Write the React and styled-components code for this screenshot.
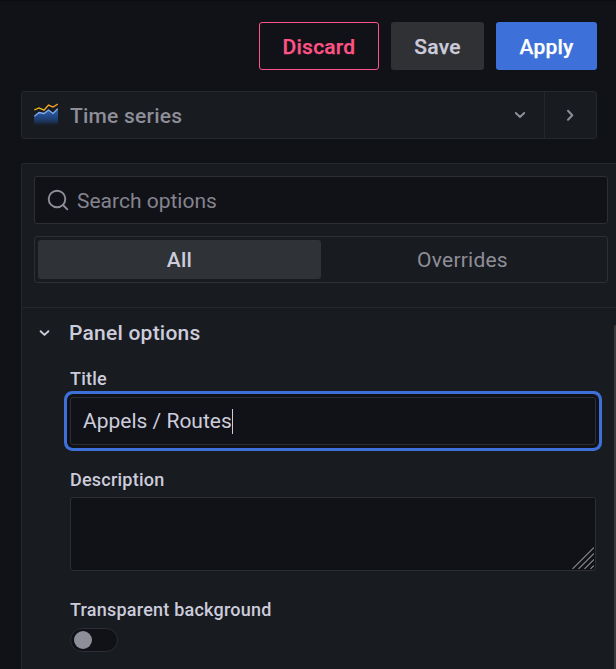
import React from "react";
import styled, { createGlobalStyle } from "styled-components";

const GlobalStyle = createGlobalStyle`
  *, *::before, *::after { box-sizing: border-box; }
  html, body { margin: 0; background: #111217; overflow: hidden; }
  body { font-family: Roboto, "Liberation Sans", sans-serif; font-size: 21px; color: #ccccdc; }
  button { font: inherit; margin: 0; padding: 0; border: 0; background: none; color: inherit; }
`;

const Page = styled.div`
  width: 616px;
  height: 669px;
  padding-top: 21px;
  display: flex;
  flex-direction: column;
  overflow: hidden;
  background: #111217;
  border-top: 1px solid #0b0c0e;
`;

const Toolbar = styled.div`
  display: flex;
  justify-content: flex-end;
  gap: 12px;
  padding-right: 19px;
`;

const variants = {
  danger: "background: transparent; color: #ff5286; border: 1px solid #ff5286;",
  secondary: "background: #303135; color: #ccccdc;",
  primary: "background: #3d71d9; color: #ffffff;",
};

const Button = styled.button`
  && {
    width: ${(p) => p.$width}px;
    height: 48px;
    padding-top: 2px;
    border-radius: 3px;
    font-weight: 500;
    letter-spacing: 0.225px;
    -webkit-text-stroke: 0.25px currentColor;
    ${(p) => variants[p.$variant]}
  }
`;

const VizPicker = styled.div`
  display: flex;
  flex: none;
  width: 576px;
  height: 48px;
  margin: 21px 0 24px 21px;
  background: #181b1f;
  border: 1px solid #24272c;
  border-radius: 3px;
  color: #8e8e99;
`;

const VizSelect = styled.button`
  && {
    flex: 1;
    display: flex;
    align-items: center;
    padding: 0 17px 0 12px;
    font-weight: 500;
    letter-spacing: 0.225px;
    text-align: left;
  }
`;

const VizName = styled.span`
  flex: 1;
  margin-left: 12px;
  padding-top: 2px;
`;

const VizToggle = styled.button`
  && {
    width: 52px;
    padding-right: 2px;
    border-left: 1px solid #24272c;
    display: flex;
    align-items: center;
    justify-content: center;
  }
`;

const Pane = styled.section`
  position: relative;
  flex: 1;
  margin-left: 21px;
  background: #181b1f;
  border: solid #24272c;
  border-width: 1px 0 0 1px;
  border-top-left-radius: 3px;
`;

const PaneHeader = styled.div`
  display: flex;
  flex-direction: column;
  gap: 12px;
  padding: 12px 8px 24px 12px;
  border-bottom: 1px solid #24272c;
`;

const SearchBox = styled.div`
  display: flex;
  align-items: center;
  gap: 7px;
  height: 48px;
  padding-left: 12px;
  background: #111217;
  border: 1px solid #2d2e34;
  border-radius: 3px;
  color: #84848f;
`;

const Placeholder = styled.span`
  padding-top: 2px;
`;

const RadioGroup = styled.div`
  display: flex;
  height: 47px;
  padding: 3px;
  border: 1px solid #2d2f34;
  border-radius: 3px;
`;

const RadioOption = styled.button`
  && {
    flex: 1;
    border-radius: 3px;
    letter-spacing: 0.225px;
    background: ${(p) => (p.$active ? "#2f3236" : "transparent")};
    color: ${(p) => (p.$active ? "#ccccdc" : "#8e8e99")};
    font-weight: ${(p) => (p.$active ? 500 : 400)};
  }
`;

const GroupHeader = styled.h2`
  display: flex;
  align-items: center;
  height: 50px;
  margin: 0;
  padding-left: 17px;
  font-size: 21px;
  font-weight: 500;
  letter-spacing: 0.225px;
`;

const GroupTitle = styled.span`
  margin-left: 19px;
`;

const Fields = styled.div`
  width: 526px;
  margin-left: 48px;
`;

const Label = styled.div`
  height: ${(p) => p.$height}px;
  padding-top: ${(p) => p.$top}px;
  font-size: 18px;
  line-height: 22px;
  font-weight: 500;
  letter-spacing: 0.225px;
`;

const TextInput = styled.div`
  display: flex;
  align-items: center;
  height: 48px;
  padding-left: 12px;
  background: #111217;
  border: 1px solid #2d2e34;
  border-radius: 3px;
  box-shadow: 0 0 0 3px #111217, 0 0 0 6px #3d71d9;
`;

const Caret = styled.span`
  width: 1px;
  height: 25px;
  background: #ccccdc;
`;

const TextArea = styled.div`
  display: flex;
  align-items: flex-end;
  justify-content: flex-end;
  height: 74px;
  padding: 1px;
  background: #111217;
  border: 1px solid #2d2e34;
  border-radius: 3px;
`;

const Switch = styled.div`
  display: flex;
  align-items: center;
  width: 48px;
  height: 24px;
  padding-left: 3px;
  background: #111217;
  border: 1px solid #2d2e34;
  border-radius: 12px;
`;

const Knob = styled.span`
  width: 18px;
  height: 18px;
  border-radius: 50%;
  background: #8e8e99;
`;

const Scrollbar = styled.div`
  position: absolute;
  top: 161px;
  right: 0;
  bottom: 0;
  width: 2px;
  background: #3a3a3d;
  border-top-left-radius: 2px;
`;

function Chevron({ w, h, d, stroke = 2 }) {
  return (
    <svg width={w} height={h} viewBox={`0 0 ${w} ${h}`} fill="none" stroke="currentColor"
      strokeWidth={stroke} strokeLinecap="round" strokeLinejoin="round">
      <path d={d} />
    </svg>
  );
}

function TimeSeriesIcon() {
  return (
    <svg width="24" height="24" viewBox="0 0 24 24" fill="none">
      <defs>
        <linearGradient id="area" x1="0" y1="6" x2="0" y2="22" gradientUnits="userSpaceOnUse">
          <stop offset="0" stopColor="#3865ab" />
          <stop offset="0.4" stopColor="#244b8c" />
          <stop offset="1" stopColor="#1f60c4" stopOpacity="0.02" />
        </linearGradient>
        <linearGradient id="line" x1="0" y1="0" x2="24" y2="0" gradientUnits="userSpaceOnUse">
          <stop offset="0" stopColor="#f2cc0c" />
          <stop offset="1" stopColor="#ff9830" />
        </linearGradient>
      </defs>
      <path d="M0 13.5L5 9.5L10 10.5L14.5 7L19 10.5L24 5.5V22H0Z" fill="url(#area)" />
      <path d="M.4 13.2L5 9.5L10 10.5L14.5 7L19 10.5L23.7 5.7" stroke="#84aff1" strokeWidth="1.3" />
      <path d="M.2 7L5 5L10 7.1L14.5 2.1L19 4L23.8 1.1" stroke="url(#line)" strokeWidth="1.3" />
    </svg>
  );
}

function SearchIcon() {
  return (
    <svg width="23" height="23" viewBox="0 0 23 23" fill="none" stroke="#8e8e99" strokeWidth="1.9" strokeLinecap="round">
      <circle cx="10" cy="10" r="8.3" />
      <path d="M16 16L20.3 20.3" />
    </svg>
  );
}

function ResizeGrip() {
  return (
    <svg width="22" height="22" viewBox="0 0 22 22" stroke="#85868a" strokeWidth="1.1">
      <path d="M.5 22L22 .5M6.5 22L22 6.5M12.5 22L22 12.5M18.5 22L22 18.5" />
    </svg>
  );
}

export default function App() {
  return (
    <>
      <GlobalStyle />
      <Page>
        <Toolbar>
          <Button $variant="danger" $width={120}>Discard</Button>
          <Button $variant="secondary" $width={93}>Save</Button>
          <Button $variant="primary" $width={101}>Apply</Button>
        </Toolbar>
        <VizPicker>
          <VizSelect>
            <TimeSeriesIcon />
            <VizName>Time series</VizName>
            <Chevron w={14} h={10} d="M2.8 3L7 7L11.2 3" />
          </VizSelect>
          <VizToggle>
            <Chevron w={10} h={14} d="M3 2.7L7.3 7.2L3 11.7" />
          </VizToggle>
        </VizPicker>
        <Pane>
          <PaneHeader>
            <SearchBox>
              <SearchIcon />
              <Placeholder>Search options</Placeholder>
            </SearchBox>
            <RadioGroup>
              <RadioOption $active>All</RadioOption>
              <RadioOption>Overrides</RadioOption>
            </RadioGroup>
          </PaneHeader>
          <GroupHeader>
            <Chevron w={11} h={9} d="M1.6 2.2L5.5 5.9L9.4 2.2" stroke={1.9} />
            <GroupTitle>Panel options</GroupTitle>
          </GroupHeader>
          <Fields>
            <Label $height={39} $top={10}>Title</Label>
            <TextInput>
              <span>Appels / Routes</span>
              <Caret />
            </TextInput>
            <Label $height={52} $top={24}>Description</Label>
            <TextArea>
              <ResizeGrip />
            </TextArea>
            <Label $height={57} $top={28}>Transparent background</Label>
            <Switch>
              <Knob />
            </Switch>
          </Fields>
          <Scrollbar />
        </Pane>
      </Page>
    </>
  );
}
